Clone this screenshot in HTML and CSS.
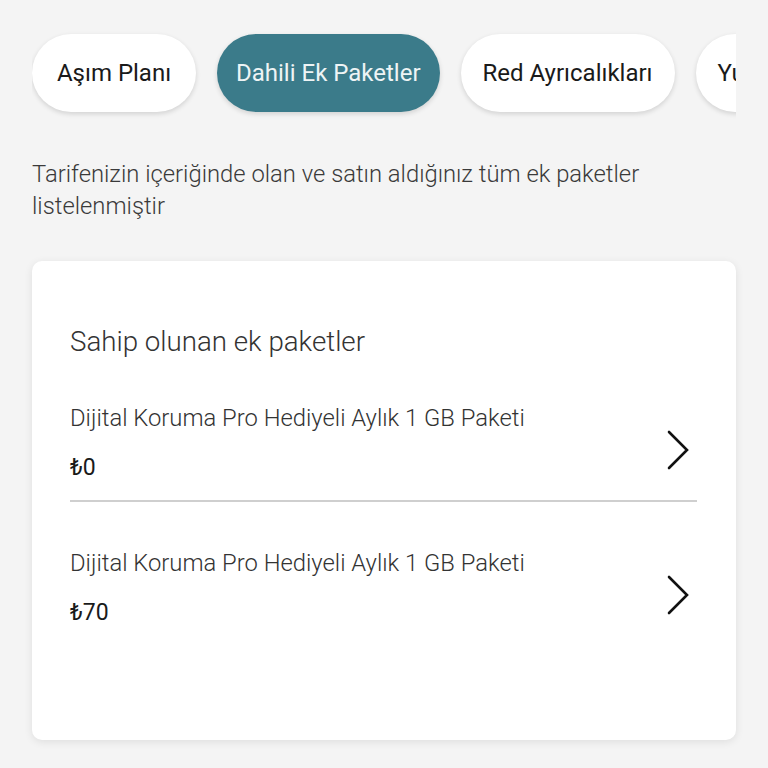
FILE: index.html
```html
<!DOCTYPE html>
<html lang="tr">
<head>
<meta charset="utf-8">
<title>Dahili Ek Paketler</title>
<link rel="stylesheet" href="styles.css">
</head>
<body>
<div class="page">
  <nav class="tabs">
    <div class="tab">Aşım Planı</div>
    <div class="tab tab-active">Dahili Ek Paketler</div>
    <div class="tab">Red Ayrıcalıkları</div>
    <div class="tab">Yurtdışı Paketler</div>
  </nav>
  <p class="intro">Tarifenizin içeriğinde olan ve satın aldığınız tüm ek paketler listelenmiştir</p>
  <section class="card">
    <h2 class="card-title">Sahip olunan ek paketler</h2>
    <div class="item item-divided">
      <div class="item-text">
        <div class="item-name">Dijital Koruma Pro Hediyeli Aylık 1 GB Paketi</div>
        <div class="item-price">₺0</div>
      </div>
      <svg class="chevron" viewBox="0 0 24 40" width="24" height="40"><path d="M3 2 L21 20 L3 38" /></svg>
    </div>
    <div class="item">
      <div class="item-text">
        <div class="item-name">Dijital Koruma Pro Hediyeli Aylık 1 GB Paketi</div>
        <div class="item-price">₺70</div>
      </div>
      <svg class="chevron" viewBox="0 0 24 40" width="24" height="40"><path d="M3 2 L21 20 L3 38" /></svg>
    </div>
  </section>
</div>
</body>
</html>
```
FILE: styles.css
```css
html, body {
  margin: 0;
  padding: 0;
}
body {
  background: #f4f4f4;
  font-family: Roboto, "Noto Sans", sans-serif;
  color: #333;
  width: 768px;
  height: 768px;
  overflow: hidden;
}
.page {
  padding: 0 32px;
}
.tabs {
  display: flex;
  gap: 21px;
  padding: 34px 0 10px;
  margin-bottom: -10px;
  overflow: hidden;
}
.tab {
  flex: none;
  height: 78px;
  min-width: 164px;
  padding: 0 22px;
  border-radius: 39px;
  background: #fff;
  box-shadow: 0 2px 5px rgba(0, 0, 0, 0.14);
  display: flex;
  align-items: center;
  justify-content: center;
  font-size: 24px;
  color: #1a1a1a;
  white-space: nowrap;
  box-sizing: border-box;
}
.tab-active {
  background: #3b7b8a;
  color: #eef4f5;
  padding: 0 19px;
}
.intro {
  margin: 46px 0 0;
  font-size: 23.8px;
  font-weight: 300;
  line-height: 32px;
  color: #3a3a3a;
  padding-right: 40px;
}
.card {
  margin-top: 39px;
  background: #fff;
  border-radius: 10px;
  box-shadow: 0 2px 8px rgba(0, 0, 0, 0.09);
  height: 479px;
  padding: 63px 39px 0 38px;
  box-sizing: border-box;
}
.card-title {
  margin: 0;
  font-size: 27.7px;
  font-weight: 300;
  line-height: 36px;
  color: #333;
}
.item {
  display: flex;
  align-items: center;
  padding: 42px 0 16px;
}
.item + .item {
  padding-top: 45px;
}
.item-divided {
  border-bottom: 2px solid #cfcfcf;
}
.item-text {
  flex: 1;
  display: flex;
  flex-direction: column;
  gap: 18px;
}
.item-name {
  font-size: 23.8px;
  font-weight: 300;
  line-height: 32px;
  color: #333;
}
.item-price {
  font-size: 23px;
  font-weight: 400;
  line-height: 32px;
  color: #1a1a1a;
}
.chevron {
  flex: none;
  margin: 14px 7px 0 0;
  fill: none;
  stroke: #111;
  stroke-width: 2.6;
  stroke-linecap: round;
  stroke-linejoin: miter;
}
```
